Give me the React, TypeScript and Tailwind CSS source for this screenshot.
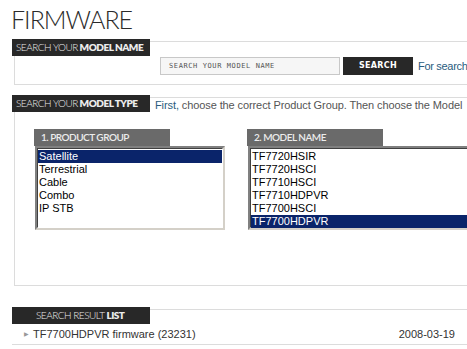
import React from "react";

const font = { fontFamily: '"Liberation Sans", Arial, sans-serif' };

function Header({
  thin,
  bold,
  w = "w-[138px]",
  pl = "pl-[4px]",
  bg = "bg-[#282828]",
  weight = "font-light",
}: {
  thin: string;
  bold: string;
  w?: string;
  pl?: string;
  bg?: string;
  weight?: string;
}) {
  return (
    <div
      className={`${w} h-[17px] ${bg} text-[#ececec] text-[10px] tracking-[-0.5px] leading-[17px] ${pl} whitespace-nowrap shrink-0 overflow-hidden`}
      style={{ fontFamily: 'Lato, "Noto Sans", sans-serif' }}
    >
      <span className={weight}>{thin}</span>
      {bold ? <span className="font-extrabold"> {bold}</span> : null}
    </div>
  );
}

function ListBox({ items, selected, w }: { items: string[]; selected: number; w: string }) {
  return (
    <div
      className={`${w} h-[84px] bg-white border-2 border-t-[#808080] border-l-[#808080] border-r-[#d4d0c8] border-b-[#d4d0c8] text-[11px] leading-[13px] text-black`}
      style={font}
    >
      <div className="border border-t-[#404040] border-l-[#404040] border-r-white border-b-white h-full pt-[1px]">
        {items.map((it, i) => (
          <div key={it} className={`pl-[1px] h-[13px] ${i === selected ? "bg-[#0a246a] text-white" : ""}`}>
            {it}
          </div>
        ))}
      </div>
    </div>
  );
}

export default function App() {
  return (
    <div className="w-[467px] h-[349px] overflow-hidden bg-white relative">
      <div className="w-[600px]">
        <div
          className="pl-[11px] pt-[3px] h-[32px] text-[25px] leading-[32px] text-[#2a2a2a] font-light tracking-[-1px]"
          style={{ fontFamily: 'Lato, "Noto Sans", sans-serif' }}
        >
          FIRMWARE
        </div>

        {/* Section 1 */}
        <div className="ml-[14px] mt-[9px] h-[44px] border border-[#dcdcdc]">
          <div className="-mt-[3px] -ml-[3px]">
            <Header thin="SEARCH YOUR" bold="MODEL NAME" />
          </div>
          <div className="flex items-center pl-[145px] mt-[1px]">
            <div
              className="w-[180px] h-[18px] border border-[#c8c8c8] bg-[#f6f6f6] text-[7px] tracking-[0.6px] leading-[16px] pl-[8px] text-[#555]"
              style={{ fontFamily: '"DejaVu Sans Mono", monospace' }}
            >
              SEARCH YOUR MODEL NAME
            </div>
            <div
              className="ml-[3px] w-[70px] h-[18px] bg-[#282828] text-white text-[8px] font-bold leading-[18px] text-center tracking-[0.3px]"
              style={{ fontFamily: '"DejaVu Sans", sans-serif' }}
            >
              SEARCH
            </div>
            <div className="ml-[5px] text-[11px] tracking-[-0.3px] text-[#2a5c7e] whitespace-nowrap" style={font}>
              For search
            </div>
          </div>
        </div>

        {/* Section 2 */}
        <div className="ml-[14px] mt-[12px] h-[189px] border border-[#dcdcdc]">
          <div className="-mt-[3px] -ml-[3px] flex items-end">
            <Header thin="SEARCH YOUR" bold="MODEL TYPE" />
            <div className="ml-[5px] text-[11px] tracking-[-0.1px] leading-[13px] text-[#555] whitespace-nowrap" style={font}>
              <span className="text-[#2a5c7e]">First,</span> choose the correct Product Group. Then choose the Model
            </div>
          </div>
          <div className="flex mt-[17px] pl-[19px]">
            <div className="flex flex-col">
              <Header thin="1. PRODUCT GROUP" bold="" w="w-[136px]" pl="pl-[7px]" bg="bg-[#6a6a6a]" weight="font-semibold" />
              <div className="ml-[1px]">
                <ListBox w="w-[190px]" items={["Satellite", "Terrestrial", "Cable", "Combo", "IP STB"]} selected={0} />
              </div>
            </div>
            <div className="flex flex-col ml-[22px]">
              <Header thin="2. MODEL NAME" bold="" w="w-[136px]" pl="pl-[7px]" bg="bg-[#6a6a6a]" weight="font-semibold" />
              <div className="ml-[1px]">
                <ListBox
                  w="w-[240px]"
                  items={["TF7720HSIR", "TF7720HSCI", "TF7710HSCI", "TF7710HDPVR", "TF7700HSCI", "TF7700HDPVR"]}
                  selected={5}
                />
              </div>
            </div>
          </div>
        </div>

        {/* Section 3 */}
        <div className="ml-[12px] mt-[21px]">
          <div className="flex">
            <Header thin="SEARCH RESULT" bold="LIST" pl="pl-[24px]" />
            <div className="flex-1 mt-[2px] border-t border-[#dcdcdc]" />
          </div>
          <div className="w-[455px] h-[21px] flex items-center border-b border-[#dcdcdc] text-[11px] text-[#333]" style={font}>
            <span className="ml-[12px] text-[6px] text-[#999]">▶</span>
            <span className="ml-[4px]">TF7700HDPVR firmware (23231)</span>
            <span className="ml-auto mr-[12px]">2008-03-19</span>
          </div>
        </div>
      </div>
    </div>
  );
}
